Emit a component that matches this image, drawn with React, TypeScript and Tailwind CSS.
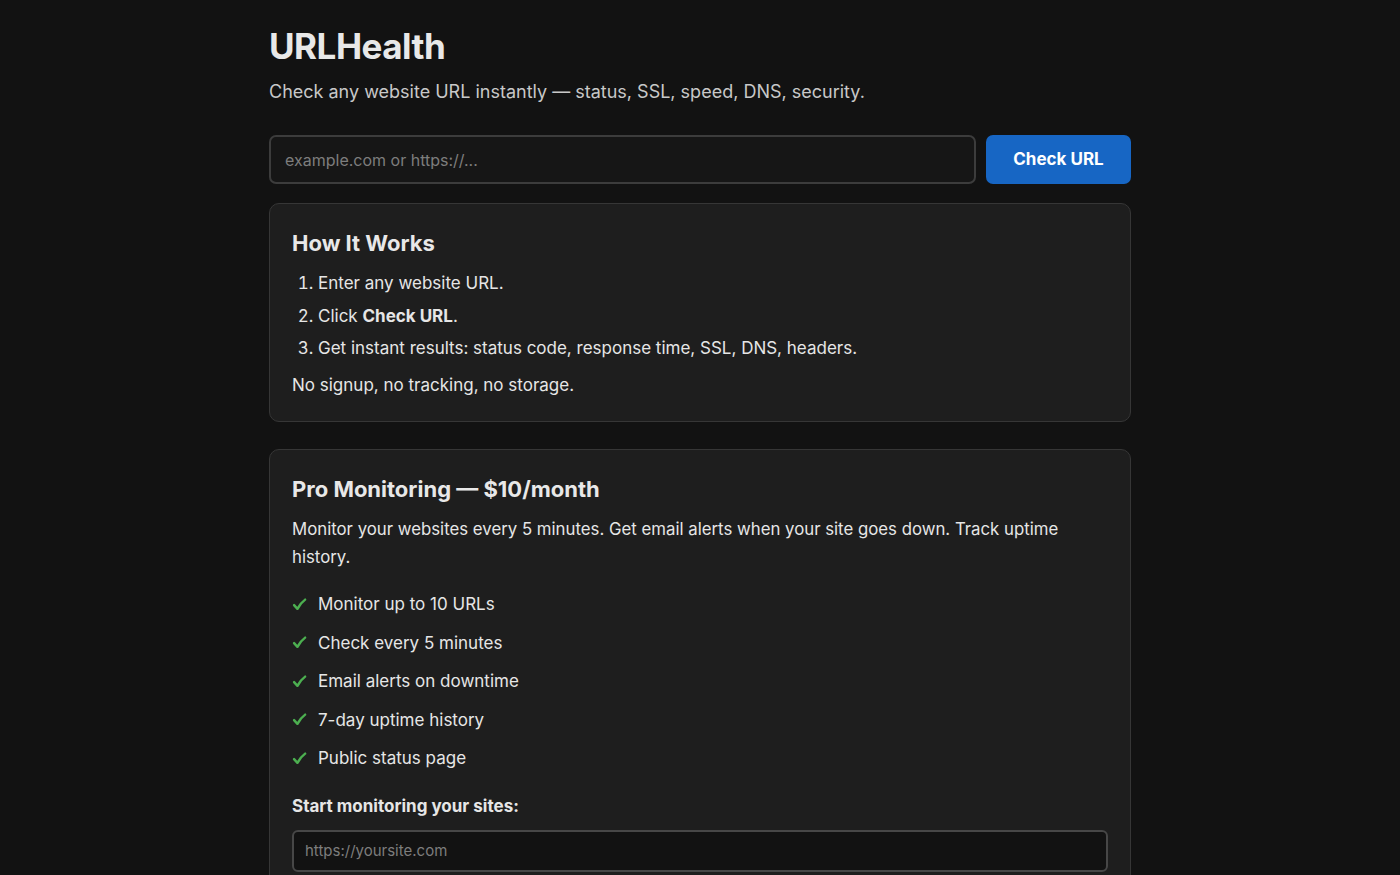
import React, { useState } from 'react';

const FEATURES = [
  'Monitor up to 10 URLs',
  'Check every 5 minutes',
  'Email alerts on downtime',
  '7-day uptime history',
  'Public status page',
];

// heavy check mark, like the text glyph
const Check = () => (
  <svg width="15" height="15" viewBox="0 0 16 16" className="shrink-0">
    <path
      d="M2.2 8.6 L5.8 12.6 Q9 6.5 14 2.8"
      fill="none"
      stroke="#4caf50"
      strokeWidth="2.6"
      strokeLinecap="round"
      strokeLinejoin="round"
    />
  </svg>
);

export default function App() {
  const [url, setUrl] = useState('');
  const [siteUrl, setSiteUrl] = useState('');

  return (
    <div
      className="min-h-screen bg-[#121212] text-[#e6e6e6]"
      style={{ fontFamily: 'Inter, "Noto Sans", sans-serif' }}
    >
      <main className="mx-auto w-[862px] pt-[24px] pb-10">
        {/* Header */}
        <h1 className="text-[35px] font-bold leading-[44px] tracking-[-0.5px] text-[#e8e8e8]">
          URLHealth
        </h1>
        <p className="mt-[11px] text-[18px] leading-[26px] text-[#c8c8c8]">
          Check any website URL instantly — status, SSL, speed, DNS, security.
        </p>

        {/* Checker */}
        <form
          className="mt-[30px] flex gap-[10px]"
          onSubmit={(e) => e.preventDefault()}
        >
          <input
            type="text"
            value={url}
            onChange={(e) => setUrl(e.target.value)}
            placeholder="example.com or https://..."
            className="h-[49px] flex-1 rounded-[7px] border-2 border-[#3c3c3c] bg-[#161616] px-[14px] text-[16px] text-[#ddd] outline-none placeholder:text-[#7d7d7d]"
          />
          <button
            type="submit"
            className="h-[49px] w-[145px] rounded-[7px] bg-[#1766c4] text-[17px] font-bold text-white"
          >
            Check URL
          </button>
        </form>

        {/* How it works */}
        <section className="mt-[19px] rounded-[10px] border border-[#363636] bg-[#1e1e1e] px-[22px] pt-[24px] pb-[24px]">
          <h2 className="text-[22px] font-bold leading-[30px] text-[#e8e8e8]">
            How It Works
          </h2>
          <ol className="mt-[13px] list-decimal pl-[26px] text-[17px] leading-[24px] text-[#e6e6e6] space-y-[8.5px]">
            <li>Enter any website URL.</li>
            <li>
              Click <strong className="font-bold">Check URL</strong>.
            </li>
            <li>
              Get instant results: status code, response time, SSL, DNS,
              headers.
            </li>
          </ol>
          <p className="mt-[13px] text-[17px] leading-[24px]">
            No signup, no tracking, no storage.
          </p>
        </section>

        {/* Pro plan */}
        <section className="mt-[27px] rounded-[10px] border border-[#363636] bg-[#1e1e1e] px-[22px] pt-[24px] pb-[24px]">
          <h2 className="text-[22px] font-bold leading-[30px] text-[#e8e8e8]">
            Pro Monitoring — $10/month
          </h2>
          <p className="mt-[11px] text-[16.8px] leading-[28px]">
            Monitor your websites every 5 minutes. Get email alerts when your
            site goes down. Track uptime history.
          </p>
          <ul className="mt-[21px] space-y-[14px] text-[17px] leading-[24.5px]">
            {FEATURES.map((f) => (
              <li key={f} className="flex items-center gap-[11px]">
                <Check />
                <span>{f}</span>
              </li>
            ))}
          </ul>
          <label className="mt-[23px] block text-[17px] font-bold leading-[24px]">
            Start monitoring your sites:
          </label>
          <input
            type="url"
            value={siteUrl}
            onChange={(e) => setSiteUrl(e.target.value)}
            placeholder="https://yoursite.com"
            className="mt-[12px] h-[42px] w-full rounded-[6px] border-2 border-[#474747] bg-[#121212] px-[11px] text-[15px] text-[#ddd] outline-none placeholder:text-[#7d7d7d]"
          />
        </section>
      </main>
    </div>
  );
}
